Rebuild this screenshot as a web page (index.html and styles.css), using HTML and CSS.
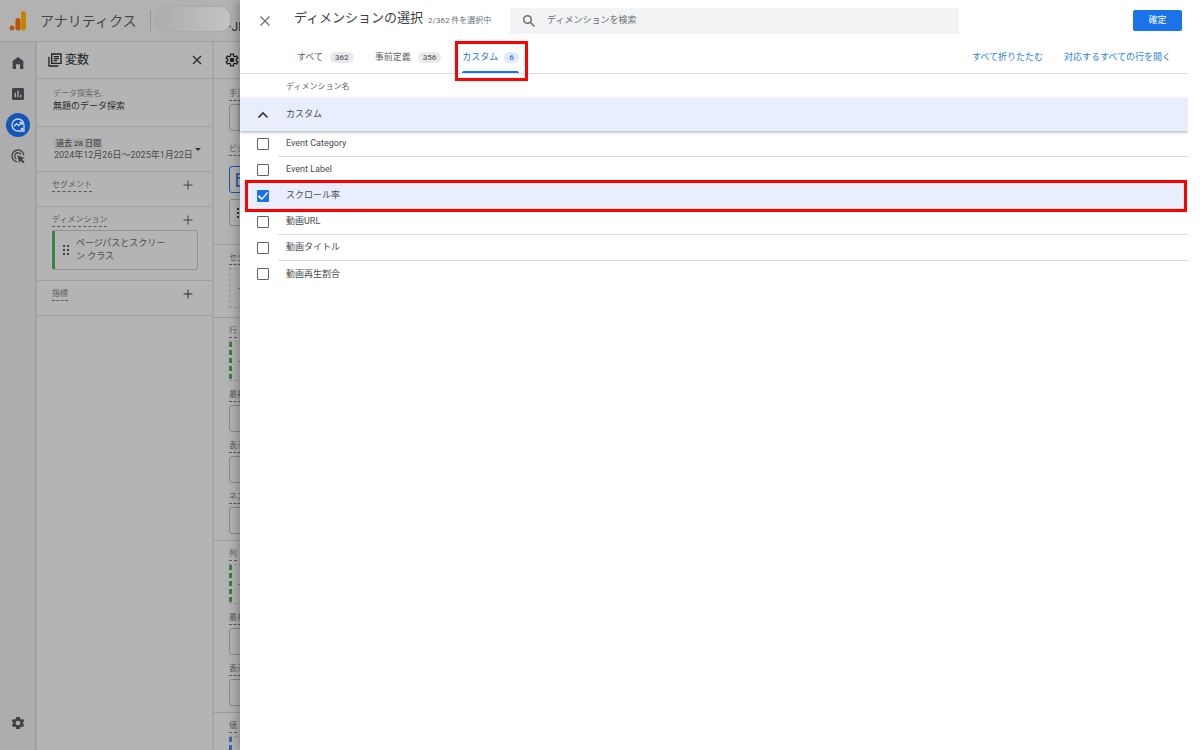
FILE: index.html
```
<!DOCTYPE html>
<html lang="ja">
<head>
<meta charset="utf-8">
<title>アナリティクス</title>
<link rel="stylesheet" href="styles.css">
</head>
<body>
<div class="app">
  <header class="topbar">
    <svg class="logo" viewBox="0 0 20 20" width="20" height="20"><rect x="13" y="0" width="5" height="19.500" rx="2.500" fill="#c48400"/><rect x="7.500" y="7" width="5" height="12.500" rx="2.500" fill="#b3560a"/><circle cx="4" cy="17" r="2.500" fill="#b3560a"/></svg>
    <span class="product">アナリティクス</span>
    <span class="divider"></span>
    <span class="account"></span>
    <span class="property">·JP</span>
  </header>
  <div class="workspace">
    <nav class="rail">
      <a href="#" aria-label="ホーム"><svg viewBox="0 0 24 24" width="16" height="16"><path fill="#3f4347" d="M12 3 4 9v12h5v-7h6v7h5V9z"/></svg></a>
      <a href="#" aria-label="レポート"><svg viewBox="0 0 24 24" width="16" height="16"><path fill="#3f4347" fill-rule="evenodd" d="M5 3h14a2 2 0 0 1 2 2v14a2 2 0 0 1-2 2H5a2 2 0 0 1-2-2V5a2 2 0 0 1 2-2zm2 7v7h2v-7zm4-3v10h2V7zm4 6v4h2v-4z"/></svg></a>
      <a href="#" class="current" aria-label="探索"><svg viewBox="0 0 24 24" width="16" height="16" fill="none" stroke="#c9d6ea" stroke-width="2"><path d="M12 3a9 9 0 1 0 0 18h9v-9a9 9 0 0 0-9-9z"/><path d="m6 14 4-4 3 3 5-5M14 8h4v4"/><circle cx="18" cy="18" r="1"/></svg></a>
      <a href="#" aria-label="広告"><svg viewBox="0 0 24 24" width="16" height="16"><g fill="none" stroke="#3f4347" stroke-width="2"><path d="M11 20.900A9 9 0 1 1 20.900 11"/><path d="M9.500 16.400A5 5 0 1 1 16.400 9.500"/></g><path fill="#3f4347" d="m11 11 11 4-4 2 4 4-2 2-4-4-2 4z"/></svg></a>
      <a href="#" class="admin" aria-label="管理"><svg viewBox="0 0 24 24" width="16" height="16"><path fill="#3f4347" fill-rule="evenodd" d="M19.400 13a7 7 0 0 0 0-2l2.100-1.600-2-3.500-2.500 1a7 7 0 0 0-1.700-1L14.900 3H9.100l-.4 2.900a7 7 0 0 0-1.700 1l-2.500-1-2 3.500L4.600 11a7 7 0 0 0 0 2l-2.100 1.600 2 3.500 2.500-1a7 7 0 0 0 1.700 1l.4 2.900h5.800l.4-2.900a7 7 0 0 0 1.700-1l2.500 1 2-3.500zM12 15.500a3.500 3.500 0 1 1 0-7 3.500 3.500 0 0 1 0 7z"/></svg></a>
    </nav>
    <section class="variables">
      <div class="panel-head">
        <svg viewBox="0 0 24 24" width="16" height="16" fill="none" stroke="#202124" stroke-width="2"><path d="M7 3h14v14H7zM3 7v14h14M10 7h8M10 10h8M10 13h5"/></svg>
        <h2>変数</h2>
        <button type="button" aria-label="閉じる"><svg viewBox="0 0 12 12" width="12" height="12" stroke="#2b2c2e" stroke-width="1.400"><path d="m2 2 8 8M10 2l-8 8"/></svg></button>
      </div>
      <div class="block name">
        <span class="caption">データ探索名:</span>
        <span class="value">無題のデータ探索</span>
      </div>
      <div class="block date">
        <div><span class="chip">過去 28 日間</span><span class="range">2024年12月26日〜2025年1月22日</span></div>
        <svg viewBox="0 0 6 4" width="6" height="4"><path fill="#333" d="M0 0h6L3 3z"/></svg>
      </div>
      <div class="block">
        <div class="adder"><span class="label">セグメント</span><button type="button" aria-label="セグメントを追加"><svg viewBox="0 0 12 12" width="12" height="12" stroke="#3f4144"><path d="M6 1.500v9M1.500 6h9"/></svg></button></div>
      </div>
      <div class="block dims">
        <div class="adder"><span class="label">ディメンション</span><button type="button" aria-label="ディメンションを追加"><svg viewBox="0 0 12 12" width="12" height="12" stroke="#3f4144"><path d="M6 1.500v9M1.500 6h9"/></svg></button></div>
        <div class="item"><svg viewBox="0 0 6 10" width="6" height="10" fill="#444"><path d="M0 0h2v2H0zM4 0h2v2H4zM0 4h2v2H0zM4 4h2v2H4zM0 8h2v2H0zM4 8h2v2H4z"/></svg><span>ページパスとスクリーン クラス</span></div>
      </div>
      <div class="block">
        <div class="adder"><span class="label">指標</span><button type="button" aria-label="指標を追加"><svg viewBox="0 0 12 12" width="12" height="12" stroke="#2b2c2e"><path d="M6 1.500v9M1.500 6h9"/></svg></button></div>
      </div>
    </section>
    <section class="settings">
      <div class="panel-head"><svg viewBox="0 0 24 24" width="16" height="16"><path fill="none" stroke="#202124" stroke-width="2" d="m18.500 13 2.300 1.800-1.800 3.100-2.700-1.100-1.800 1-.4 2.900H9.900l-.4-2.900-1.800-1L5 17.900l-1.800-3.100L5.500 13v-2L3.200 9.200 5 6.100l2.700 1.100 1.800-1 .4-2.900h4.200l.4 2.900 1.800 1L19 6.100l1.800 3.100-2.300 1.800z"/><circle cx="12" cy="12" r="3.500" fill="#202124"/></svg></div>
      <div class="group first">
        <span class="label">手法</span><span class="box"></span>
        <span class="label">ビジ</span>
        <span class="box active"><svg viewBox="0 0 14 14" width="14" height="14" fill="none" stroke="#174ea6" stroke-width="1.500"><path d="M1 1h12v12H1zM1 5h12"/></svg></span>
        <span class="box"><svg viewBox="0 0 14 14" width="14" height="14" fill="#333"><path d="M1 2h2v2H1zM1 6h2v2H1zM1 10h2v2H1zM5 2h8v2H5zM5 6h8v2H5zM5 10h8v2H5z"/></svg></span>
      </div>
      <div class="group segments"><span class="label">セグ</span><span class="drop plain"><i></i></span></div>
      <div class="group">
        <span class="label">行</span><span class="drop green"><i></i></span>
        <span class="label">最初</span><span class="box"></span>
        <span class="label">表示</span><span class="box"></span>
        <span class="label">ネス</span><span class="box"></span>
      </div>
      <div class="group">
        <span class="label">列</span><span class="drop green"><i></i></span>
        <span class="label">最初</span><span class="box"></span>
        <span class="label">表示</span><span class="box"></span>
      </div>
      <div class="group"><span class="label">値</span><span class="drop blue"><i></i></span></div>
    </section>
  </div>
</div>
<main class="dialog">
  <header class="dialog-head">
    <button type="button" class="close" aria-label="閉じる"><svg viewBox="0 0 12 12" width="12" height="12" stroke="#6b6f74" stroke-width="1.300"><path d="m1.500 1.500 9 9M10.500 1.500l-9 9"/></svg></button>
    <h1>ディメンションの選択</h1>
    <span class="count">2/362 件を選択中</span>
    <label class="search">
      <svg viewBox="0 0 14 14" width="14" height="14" fill="none" stroke="#6b6f74" stroke-width="1.500"><circle cx="5.500" cy="5.500" r="3.800"/><path d="m8.300 8.300 4.200 4.200"/></svg>
      <input type="text" placeholder="ディメンションを検索" aria-label="ディメンションを検索">
    </label>
    <button type="button" class="confirm">確定</button>
  </header>
  <nav class="tabs">
    <button type="button">すべて<span class="badge">362</span></button>
    <button type="button">事前定義<span class="badge">356</span></button>
    <button type="button" class="selected">カスタム<span class="badge">6</span></button>
    <span class="links"><a href="#">すべて折りたたむ</a><a href="#">対応するすべての行を開く</a></span>
  </nav>
  <table>
    <thead><tr><th class="pick"></th><th>ディメンション名</th></tr></thead>
    <tbody>
      <tr class="parent"><td class="pick"><button type="button" aria-label="折りたたむ"><svg viewBox="0 0 12 8" width="12" height="8" fill="none" stroke="#333" stroke-width="1.700"><path d="m1.500 6.500 4.500-4.500 4.500 4.500"/></svg></button></td><td>カスタム</td></tr>
      <tr><td class="pick"><input type="checkbox" id="d1"></td><td><label for="d1">Event Category</label></td></tr>
      <tr><td class="pick"><input type="checkbox" id="d2"></td><td><label for="d2">Event Label</label></td></tr>
      <tr class="checked"><td class="pick"><input type="checkbox" id="d3" checked></td><td><label for="d3">スクロール率</label></td></tr>
      <tr><td class="pick"><input type="checkbox" id="d4"></td><td><label for="d4">動画URL</label></td></tr>
      <tr><td class="pick"><input type="checkbox" id="d5"></td><td><label for="d5">動画タイトル</label></td></tr>
      <tr><td class="pick"><input type="checkbox" id="d6"></td><td><label for="d6">動画再生割合</label></td></tr>
    </tbody>
  </table>
</main>
</body>
</html>
```
FILE: styles.css
```
* { box-sizing: border-box; }
body {
  margin: 0;
  padding-right: 12px;
  height: 100vh;
  display: flex;
  overflow: hidden;
  background: #fff;
  color: #484b4f;
  font: 9px/13px Roboto, "Noto Sans CJK JP", sans-serif;
}
button {
  border: 0;
  padding: 0;
  background: none;
  font: inherit;
  color: inherit;
  display: flex;
  align-items: center;
}
svg { display: block; flex: none; }
h1, h2 { margin: 0; font-weight: 400; }
a { color: #2b7de9; text-decoration: none; }

/* dimmed application behind the dialog */
.app {
  flex: 0 0 240px;
  height: 100%;
  overflow: hidden;
  display: flex;
  flex-direction: column;
  background: #b4b4b4;
}
.topbar {
  flex: 0 0 42px;
  display: flex;
  align-items: center;
  padding-left: 8px;
  background: #b2b2b2;
  border-bottom: 1px solid #9d9d9d;
}
.product { margin-left: 12px; font-size: 14px; line-height: 20px; color: #45484b; white-space: nowrap; }
.divider { flex: none; margin: 0 5px 0 14px; width: 1px; height: 21px; background: #969696; }
.account {
  flex: none;
  width: 74px;
  height: 24px;
  border-radius: 10px;
  margin-bottom: 4px;
  background: linear-gradient(90deg, #adadad, #bcbcbc 70%, #c4c4c4);
  box-shadow: 0 0 3px #a2a2a2;
}
.property { margin: 14px 0 0 -2px; font-size: 12px; color: #2e2f31; white-space: nowrap; }
.workspace { flex: 1; min-height: 0; display: flex; }
.rail {
  flex: 0 0 37px;
  display: flex;
  flex-direction: column;
  align-items: center;
  gap: 7px;
  padding: 9px 0 15px;
  background: #adadad;
  border-right: 2px solid #a2a2a2;
}
.rail a {
  width: 24px;
  height: 24px;
  border-radius: 50%;
  display: flex;
  align-items: center;
  justify-content: center;
}
.rail .current { background: #1557b4; }
.rail .admin { margin-top: auto; }
.variables { flex: 0 0 177px; border-right: 2px solid #a6a6a6; }
.panel-head {
  height: 37px;
  display: flex;
  align-items: center;
  border-bottom: 1px solid #9f9f9f;
}
.variables .panel-head { padding: 0 9px 0 10px; }
.panel-head h2 { margin-left: 2px; font-size: 12px; color: #202124; }
.panel-head button { margin-left: auto; }
.block { padding: 7px 14px 14px 15px; border-bottom: 1px solid #a0a0a0; }
.name { height: 48px; padding: 9px 16px; display: flex; flex-direction: column; }
.caption { font-size: 8px; line-height: 12px; color: #66696c; }
.value { line-height: 12px; color: #2b2c2e; }
.date { height: 45px; padding: 11px 11px 0 17px; display: flex; justify-content: space-between; }
.date > div { display: flex; flex-direction: column; align-items: flex-start; }
.date svg { margin-top: 10px; }
.chip { padding: 0 2px; background: #a7a9aa; font-size: 8px; line-height: 11px; font-weight: 500; }
.range { line-height: 12px; white-space: nowrap; margin-right: -12px; }
.label {
  align-self: flex-start;
  font-size: 8px;
  line-height: 12px;
  color: #5a5c5f;
  white-space: nowrap;
  border-bottom: 1px dashed #5c5c5c;
}
.adder { display: flex; justify-content: space-between; align-items: flex-start; padding-right: 4px; }
.dims { padding-bottom: 10px; }
.item {
  display: flex;
  align-items: center;
  gap: 7px;
  height: 40px;
  margin-top: 3px;
  padding: 0 24px 0 8px;
  border: 1px solid #929292;
  border-left: 3px solid #398144;
  border-radius: 3px;
}
.settings { flex: 1; min-width: 0; overflow: hidden; }
.settings .panel-head { padding-left: 10px; }
.group {
  display: flex;
  flex-direction: column;
  padding: 7px 0 6px 15px;
  border-bottom: 1px solid #9a9a9a;
}
.first { padding: 9px 0 18px 15px; }
.segments { padding-bottom: 9px; }
.group .label + span { margin-top: 3px; }
.group span + .label { margin-top: 8px; }
.first span + .label { margin-top: 12px; }
.first .label + .active { margin-top: 10px; }
.box {
  width: 60px;
  height: 27px;
  border: 1px solid #8b8b8b;
  border-radius: 3px;
  padding: 6px;
}
.box.active { border: 1px solid #1b55a8; margin-bottom: 6px; }
.drop {
  width: 60px;
  height: 40px;
  border: 1px dashed #969696;
  display: flex;
  align-items: center;
  padding-left: 8px;
}
.drop i { width: 20px; height: 1px; background: #7e7e7e; }
.green, .blue { border-left: 0; padding-left: 9px; }
.green { background: repeating-linear-gradient(#398144 0 5px, #b4b4b4 5px 8px) left / 3px 100% no-repeat; }
.blue { background: repeating-linear-gradient(#3c66b0 0 5px, #b4b4b4 5px 8px) left / 3px 100% no-repeat; }

/* dimension picker */
.dialog {
  flex: 1;
  min-width: 0;
  position: relative;
  background: #fff;
  box-shadow: 0 0 12px rgba(0, 0, 0, .4);
  clip-path: inset(0 0 0 -20px);
}
.dialog-head { display: flex; align-items: center; height: 41px; padding: 0 6px 0 19px; }
.dialog-head h1 { margin: 0 5px 6px 23px; font-size: 13px; line-height: 18px; color: #3c4043; white-space: nowrap; }
.count { width: 65px; font-size: 8px; color: #6b6f74; white-space: nowrap; }
.search {
  flex: 0 1 449px;
  height: 26px;
  margin: 0 16px 0 17px;
  padding-left: 12px;
  display: flex;
  align-items: center;
  gap: 11px;
  background: #f1f3f4;
}
.search input { flex: 1; min-width: 0; border: 0; padding: 0; background: none; font: inherit; outline: 0; }
.search input::placeholder { color: #6b6f74; opacity: 1; }
.confirm {
  width: 49px;
  height: 21px;
  margin-left: auto;
  justify-content: center;
  border-radius: 2px;
  background: #1a73e8;
  color: #fff;
}
.tabs {
  height: 33px;
  display: flex;
  align-items: stretch;
  gap: 21px;
  padding: 0 17px 0 57px;
  border-bottom: 1px solid #dadce0;
}
.tabs button { gap: 7px; color: #5f6368; white-space: nowrap; }
.badge {
  padding: 0 5px;
  border-radius: 6px;
  background: #e8eaed;
  font-size: 8px;
  line-height: 11px;
  font-weight: 500;
}
.tabs .selected { gap: 6px; position: relative; color: #1a73e8; }
.selected .badge { background: #e1eafc; }
.selected::before {
  content: "";
  position: absolute;
  inset: auto 0 0;
  height: 2px;
  border-radius: 2px 2px 0 0;
  background: #1a73e8;
}
.selected::after {
  content: "";
  position: absolute;
  inset: 0 -9px -8px -7px;
  border: 3px solid #f00;
}
.links { margin-left: auto; display: flex; align-items: center; gap: 21px; white-space: nowrap; }
table { width: 100%; border-spacing: 0; }
th, td { padding: 0 0 0 8px; text-align: left; font-weight: 400; }
th { height: 24px; font-size: 8px; color: #5f6368; }
td { height: 26px; border-bottom: 1px solid #dadce0; }
tr:last-child td { border-bottom: 0; }
.pick { width: 38px; padding: 0 0 0 17px; border-bottom: 0; }
.parent { background: #e8eefc; box-shadow: 0 1px 3px rgba(0, 0, 0, .35); }
.parent td { height: 33px; border-bottom: 0; }
.checked { position: relative; background: #e8eefc; }
.checked::after {
  content: "";
  position: absolute;
  inset: -3px 1px -3px 5px;
  border: 3px solid #f00;
  pointer-events: none;
}
input[type="checkbox"] {
  appearance: none;
  display: block;
  width: 12px;
  height: 12px;
  margin: 0;
  border: 1px solid #5f6368;
  border-radius: 1px;
}
input[type="checkbox"]:checked {
  border: 0;
  background: #1a73e8;
}
input[type="checkbox"]:checked::before {
  content: "";
  display: block;
  width: 12px;
  height: 12px;
  background: #fff;
  clip-path: polygon(1px 7px, 2px 5px, 5px 8px, 10px 2px, 11px 3px, 5px 10px);
}
```
